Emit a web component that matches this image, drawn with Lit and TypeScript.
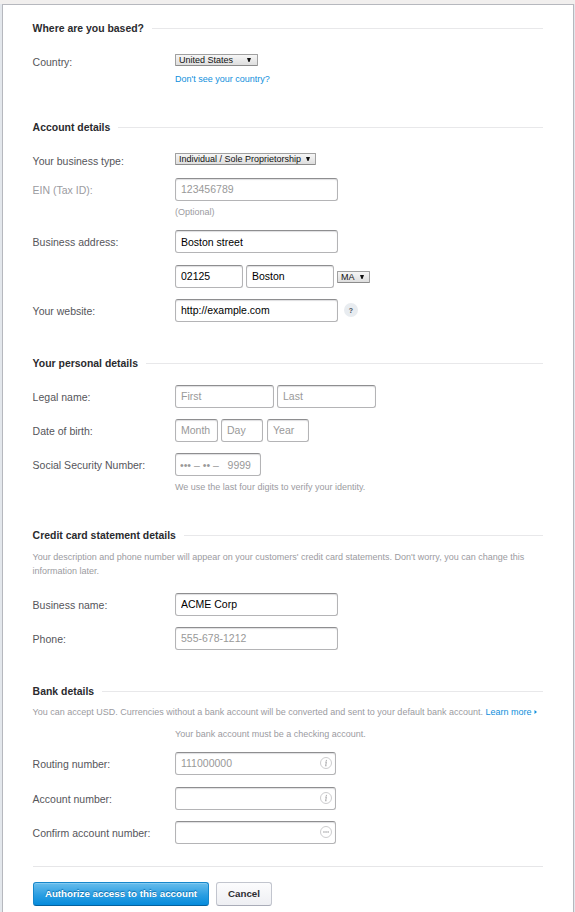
import { LitElement, html, css, svg, nothing } from "lit";
import { customElement, property } from "lit/decorators.js";

@customElement("form-section")
class FormSection extends LitElement {
  @property() heading = "";
  static styles = css`
    :host { display: block; margin-bottom: 33px; }
    .head { display: flex; align-items: center; gap: 8px; height: 16px; white-space: nowrap;
      font-size: 10.45px; font-weight: bold; color: #2a2a2e; }
    .head span:first-child { margin-left: -0.4px; }
    .rule { flex: 1; height: 1px; background: #e8e8ea; margin-top: 1px; }
  `;
  render() {
    return html`<div class="head"><span>${this.heading}</span><span class="rule"></span></div><slot></slot>`;
  }
}

@customElement("drop-down")
class DropDown extends LitElement {
  @property() value = "";
  static styles = css`
    :host { display: flex; box-sizing: border-box; height: 12px; align-items: center; justify-content: space-between;
      border: 1px solid #a0a0a0; border-bottom-color: #8c8c8c; border-radius: 1px; padding: 0 5px 0 3px;
      background: linear-gradient(#f6f6f6, #dedede); color: #111; font-size: 9px; line-height: 10px; white-space: nowrap; }
    svg { display: block; flex: none; }
  `;
  render() {
    return html`<span>${this.value}</span><svg width="4" height="4" viewBox="0 0 4 4"><path d="M0 0H4L2.5 4H1.5Z" fill="#111" /></svg>`;
  }
}

@customElement("app-root")
class AppRoot extends LitElement {
  static styles = css`
    :host { display: block; box-sizing: border-box; height: 912px; overflow: hidden; padding: 4px 1px 0 2px;
      background: linear-gradient(#f1efee 4px, #e3e7ec 4px);
      font-family: "Liberation Sans", Arial, sans-serif; font-size: 10.5px; color: #55555a; }
    .sheet { box-sizing: border-box; height: 908px; background: #fff; border: 1px solid #b6b8be; border-bottom: 0; padding: 15px 30px 0 30px; }
    .row { display: grid; grid-template-columns: 142px 1fr; margin-top: 11px; }
    .row.first { margin-top: 14px; }
    .row.choice { margin-top: 15px; height: 28px; }
    .row.country { height: 35px; }
    .row.tight { margin-top: 0; }
    .row.loose { margin-top: 12px; }
    .row.after-text { margin-top: 15px; }
    .label { line-height: 23px; height: 23px; white-space: nowrap; padding-top: 1px; box-sizing: border-box;
      margin-left: -0.4px; }
    .choice .label { padding-top: 0; }
    .muted { color: #9b9b9f; }
    .line { display: flex; align-items: center; height: 23px; }
    .choice .line { align-items: flex-start; height: 18px; padding-top: 3px; }
    input { box-sizing: border-box; height: 23px; margin: 0; padding: 0 5px 2px; border: 1px solid #b4b4b6; border-top-color: #8e8e90;
      border-radius: 3px; background: #fff; box-shadow: inset 0 1px 1px #dedee0; color: #000; font: inherit;
      outline: none; }
    input::placeholder { color: #999; opacity: 1; }
    .full { width: 163px; }
    .street { padding-bottom: 0; }
    .zip { width: 68px; margin-right: 3px; }
    .city { width: 88px; margin-right: 3px; }
    .half { width: 99px; margin-right: 3px; }
    .month { width: 43px; margin-right: 3px; }
    .day { width: 42px; margin-right: 4px; }
    .year { width: 42px; }
    .ssn { width: 86px; padding: 0 4px; }
    .box { display: flex; align-items: center; width: 161px; }
    .box input { width: 161px; flex: none; }
    .box svg { margin: 0 0 1px -16px; flex: none; }
    .country-select { width: 83px; padding-right: 6px; }
    .type-select { width: 141px; }
    .state-select { width: 33px; margin-top: 1px; }
    .hint { font-size: 9px; line-height: 14px; color: #9b9b9f; white-space: nowrap; }
    .gap { margin-top: 4px; }
    .text { font-size: 9px; line-height: 14px; color: #9b9b9f; margin: 7px 0 0 -0.5px; }
    .bank { margin-top: 6px; white-space: nowrap; }
    .bank svg { margin: 0 0 1px 0.5px; vertical-align: baseline; }
    .checking { margin: 8px 0 -1px 142px; }
    a { color: #0f8fdc; text-decoration: none; }
    .help { display: flex; align-items: center; justify-content: center; width: 14px; height: 14px; margin: -1px 0 0 6px;
      border-radius: 50%; background: #e8ecf0; color: #444c58; font-size: 7px; font-weight: bold; }
    .foot { border-top: 1px solid #e6e6e8; margin-top: -11px; padding-top: 15px; display: flex; gap: 7px; }
    button { box-sizing: border-box; height: 24px; border-radius: 3px; padding: 0 0 2px; font: bold 9.75px "Liberation Sans", Arial, sans-serif;
      white-space: nowrap; }
    .go { width: 176px; border: 1px solid #1687cb; border-bottom-color: #04619e; color: #fff;
      background: linear-gradient(#68bdec, #2a9ee2 55%, #058bdc); box-shadow: inset 0 1px #83caf1; text-shadow: 0 -1px 1px #0a6aa8; }
    .cancel { width: 56px; border: 1px solid #c2c5ce; border-bottom-color: #a9acb8; color: #2c2c30; background: linear-gradient(#fcfcfd, #eeeff3); }
  `;

  private field(label: string, cls: string, value: string, placeholder: string, rowCls = "", hint = "", muted = false) {
    return html`<div class="row ${rowCls}"><div class="label ${muted ? "muted" : ""}">${label}</div>
      <div><div class="line">${this.input(cls, value, placeholder)}</div>
      ${hint ? html`<div class="hint gap">${hint}</div>` : nothing}</div></div>`;
  }

  private input(cls: string, value: string, placeholder = "") {
    return html`<input class=${cls} .value=${value} placeholder=${placeholder} />`;
  }

  private badge(kind: "info" | "dots") {
    const mark = kind === "info"
      ? svg`<path d="M5.2 5.1H6.4L5.6 8.8H6.6M6.5 2.9L6.3 4" stroke="#b4b4b6" stroke-width="1.1" fill="none" />`
      : svg`<path d="M3.2 6H4.7M5.3 6H6.8M7.4 6H8.9" stroke="#b4b4b6" stroke-width="1.3" fill="none" />`;
    return html`<svg width="12" height="12" viewBox="0 0 12 12"><circle cx="6" cy="6" r="5.5" fill="none" stroke="#c6c6c8" stroke-width="0.9" />${mark}</svg>`;
  }

  private bankField(label: string, placeholder: string, kind: "info" | "dots", rowCls = "") {
    return html`<div class="row ${rowCls}"><div class="label">${label}</div>
      <div class="box">${this.input("", "", placeholder)}${this.badge(kind)}</div></div>`;
  }

  render() {
    return html`<div class="sheet">
      <form-section heading="Where are you based?">
        <div class="row choice country"><div class="label">Country:</div><div>
          <div class="line"><drop-down class="country-select" value="United States"></drop-down></div>
          <div class="hint"><a>Don't see your country?</a></div></div></div>
      </form-section>
      <form-section heading="Account details">
        <div class="row choice"><div class="label">Your business type:</div>
          <div class="line"><drop-down class="type-select" value="Individual / Sole Proprietorship"></drop-down></div></div>
        ${this.field("EIN (Tax ID):", "full", "", "123456789", "tight", "(Optional)", true)}
        ${this.field("Business address:", "full street", "Boston street", "")}
        <div class="row loose"><div></div><div class="line">
          ${this.input("zip", "02125")}${this.input("city", "Boston")}<drop-down class="state-select" value="MA"></drop-down></div></div>
        <div class="row"><div class="label">Your website:</div><div class="line">
          ${this.input("full", "http://example.com")}<span class="help">?</span></div></div>
      </form-section>
      <form-section heading="Your personal details">
        <div class="row first"><div class="label">Legal name:</div><div class="line">
          ${this.input("half", "", "First")}${this.input("half", "", "Last")}</div></div>
        <div class="row"><div class="label">Date of birth:</div><div class="line">
          ${this.input("month", "", "Month")}${this.input("day", "", "Day")}${this.input("year", "", "Year")}</div></div>
        ${this.field("Social Security Number:", "ssn", "", "••• – •• –   9999", "", "We use the last four digits to verify your identity.")}
      </form-section>
      <form-section heading="Credit card statement details">
        <div class="text">Your description and phone number will appear on your customers' credit card statements. Don't worry, you can change this information later.</div>
        ${this.field("Business name:", "full", "ACME Corp", "", "after-text")}
        ${this.field("Phone:", "full", "", "555-678-1212")}
      </form-section>
      <form-section heading="Bank details">
        <div class="text bank">You can accept USD. Currencies without a bank account will be converted and sent to your default bank account. <a>Learn more <svg width="3" height="4" viewBox="0 0 3 4"><path d="M0.5 0L3 2L0.5 4Z" fill="#0f8fdc" /></svg></a></div>
        <div class="hint checking">Your bank account must be a checking account.</div>
        ${this.bankField("Routing number:", "111000000", "info", "loose")}
        ${this.bankField("Account number:", "", "info", "loose")}
        ${this.bankField("Confirm account number:", "", "dots")}
      </form-section>
      <div class="foot"><button class="go">Authorize access to this account</button><button class="cancel">Cancel</button></div>
    </div>`;
  }
}
